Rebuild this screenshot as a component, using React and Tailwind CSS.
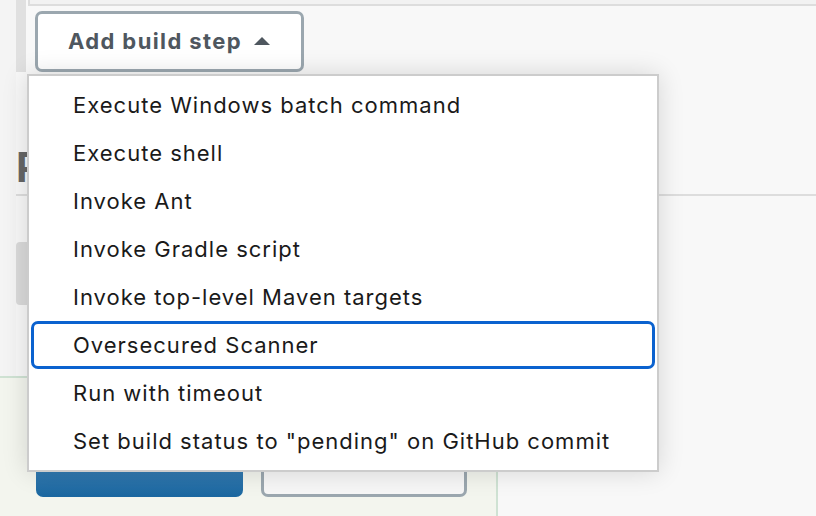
import React from 'react'

const items = [
  'Execute Windows batch command',
  'Execute shell',
  'Invoke Ant',
  'Invoke Gradle script',
  'Invoke top-level Maven targets',
  'Oversecured Scanner',
  'Run with timeout',
  'Set build status to "pending" on GitHub commit',
]

function App() {

  const active = 'Oversecured Scanner'

  return (

    <div className="relative w-[816px] h-[516px] overflow-hidden bg-[#f8f8f8] flex flex-col" style={{ fontFamily: 'Inter, "Noto Sans", sans-serif' }}>

      {/* page behind the menu */}
      <div className="h-[376px] flex">

        <div className="w-[16px] bg-[#f4f4f4]" />

        <div className="flex-1 flex flex-col">

          <div className="h-[72px] border-l-[10px] border-[#e0e0e0] flex flex-col">
            <div className="h-[6px] ml-[2px] border-l-2 border-b-2 border-[#dddddd] bg-[#f2f2f2]" />
            <button className="mt-[5px] ml-[9px] w-[269px] h-[61px] bg-white border-[3px] border-[#9ba7af] rounded-[7px] flex items-center justify-center gap-[11px] text-[#4f575f] text-[22px] font-bold tracking-[1.4px]">
              Add build step
              <svg width="18" height="10" viewBox="0 0 18 10" className="mt-[-2px]">
                <path d="M1 9 L9 1 L17 9 Z" fill="#4f575f" />
              </svg>
            </button>
          </div>

          <div className="h-[124px] border-b-2 border-[#dddddd] flex items-end pb-[6px] overflow-hidden">
            <h2 className="text-[41px] font-bold text-[#666] leading-none whitespace-nowrap">Post-build Actions</h2>
          </div>

          <div className="mt-[46px] w-[260px] h-[63px] bg-[#dadada] rounded-[4px]" />

        </div>

      </div>

      <div className="flex-1 flex">
        <div className="w-[498px] bg-[#f3f5ee] border-t-2 border-r-2 border-[#cfe2d3] flex items-end gap-[18px] pl-[36px] pb-[19px]">
          <button className="w-[207px] h-[56px] rounded-[7px] bg-gradient-to-b from-[#4a8fc2] to-[#1a67a0]" />
          <button className="w-[206px] h-[56px] rounded-[7px] bg-[#f6f6f6] border-[3px] border-[#9ba7af]" />
        </div>
        <div className="flex-1" />
      </div>

      {/* dropdown menu */}
      <div className="absolute left-[27px] top-[74px] w-[632px] bg-white border-2 border-[#cccccc] py-[5px] px-[2px] shadow-[0_0_24px_rgba(0,0,0,0.14)]">
        {items.map((item) => (
          <div
            key={item}
            className={item === active
              ? 'h-[48px] flex items-center pl-[39px] text-[22px] text-[#1a1a1a] tracking-[1px] border-[3px] border-[#0b62cf] rounded-[7px]'
              : 'h-[48px] flex items-center pl-[42px] text-[22px] text-[#1a1a1a] tracking-[1px]'}
          >
            {item}
          </div>
        ))}
      </div>

    </div>

  )

}

export default App
